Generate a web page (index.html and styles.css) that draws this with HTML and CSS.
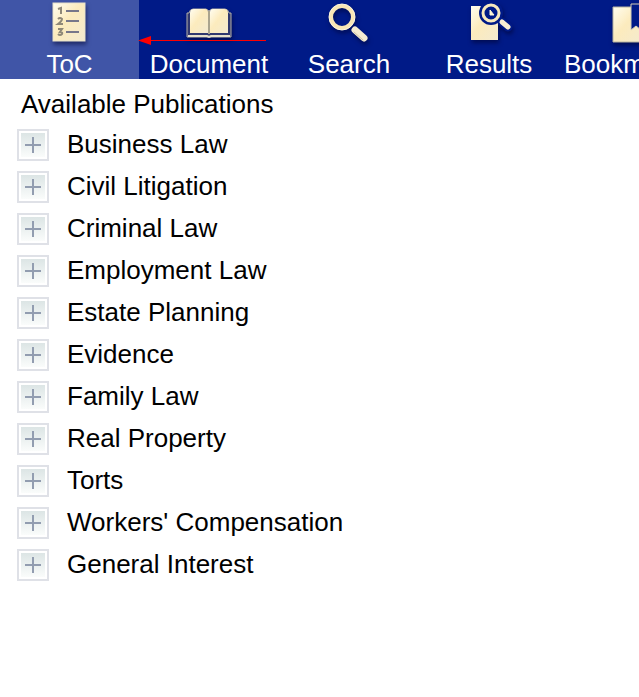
FILE: index.html
```html
<!DOCTYPE html>
<html lang="en">
<head>
  <meta charset="UTF-8">
  <meta name="viewport" content="width=device-width, initial-scale=1.0">
  <title>Available Publications</title>
  <link rel="stylesheet" href="styles.css">
</head>
<body>

  <header class="toolbar">
    <nav class="tabs">
      <a href="#toc" class="tab active">
        <svg class="icon" width="48" height="48" viewBox="0 0 48 48" aria-hidden="true">
          <defs>
            <linearGradient id="cream" x1="0" y1="0" x2="1" y2="1">
              <stop offset="0" stop-color="#fffdf0"/>
              <stop offset="0.45" stop-color="#fcebbd"/>
              <stop offset="1" stop-color="#f3ead0"/>
            </linearGradient>
          </defs>
          <rect x="7" y="3" width="32" height="38" fill="url(#cream)" stroke="#e8e2cb"/>
          <g fill="none" stroke="#8f8878" stroke-width="2">
            <path d="M20 11H33M20 21H33M20 32H33" stroke="#77778a"/>
            <path d="M12 9L15 8V14"/>
            <path d="M12 19Q14 17 16 19Q16 21 12 24H17"/>
            <path d="M12 29H16L14 32Q17 32 16 34Q14 36 12 34"/>
          </g>
        </svg>
        <span>ToC</span>
      </a>
      <a href="#document" class="tab">
        <svg class="icon" width="48" height="48" viewBox="0 0 48 48" aria-hidden="true">
          <path d="M2 13H4Q5 9 8 9H21L24 11L27 9H40Q43 9 44 13H46V37H2Z" fill="#30386f" stroke="#b4b2aa"/>
          <path d="M5 13Q5 9 9 9H20Q23 9 23 12V33H5Z" fill="url(#cream)"/>
          <path d="M25 12Q25 9 28 9H39Q43 9 43 13V33H25Z" fill="url(#cream)"/>
          <path d="M3 36H22L24 37L26 36H45" fill="none" stroke="#e6e0cc" stroke-width="2"/>
          <path d="M24 11V34" stroke="#aaa48e" stroke-width="2"/>
        </svg>
        <span>Document</span>
      </a>
      <a href="#search" class="tab">
        <svg class="icon" width="48" height="48" viewBox="0 0 48 48" aria-hidden="true">
          <circle cx="17" cy="17" r="11" fill="none" stroke="#f8e6b6" stroke-width="4"/>
          <circle cx="17" cy="17" r="13" fill="none" stroke="#fff8df"/>
          <path d="M30 30L39 38" stroke="#f5ecd2" stroke-width="7" stroke-linecap="round"/>
          <path d="M29 32L38 40" stroke="#cfc5a9" stroke-width="1" stroke-linecap="round"/>
        </svg>
        <span>Search</span>
      </a>
      <a href="#results" class="tab">
        <svg class="icon" width="48" height="48" viewBox="0 0 48 48" aria-hidden="true">
          <path d="M6 6H33V40H6Z" fill="url(#cream)"/>
          <circle cx="26" cy="13" r="12" fill="#001a87"/>
          <circle cx="26" cy="13" r="8" fill="none" stroke="#f8e9be" stroke-width="3"/>
          <path d="M25 10V15H29Z" fill="#fff6d6" stroke="#fff6d6"/>
          <path d="M37 22L43 27" stroke="#001a87" stroke-width="9" stroke-linecap="round"/>
          <path d="M37 22L43 27" stroke="#f8efd3" stroke-width="5" stroke-linecap="round"/>
        </svg>
        <span>Results</span>
      </a>
      <a href="#bookmarks" class="tab">
        <svg class="icon" width="48" height="48" viewBox="0 0 48 48" aria-hidden="true">
          <path d="M8 7H40V42H8Z" fill="url(#cream)" stroke="#b8b4a2"/>
          <path d="M26 4H36V30L31 26L26 30Z" fill="#001a87" stroke="#d5cfb8"/>
        </svg>
        <span>Bookmarks</span>
      </a>
    </nav>

    <svg class="arrow" width="128" height="9" viewBox="0 0 128 9" aria-hidden="true">
      <rect x="8" y="4" width="120" height="1" fill="#f00"/>
      <path d="M0 4.500L13 0V9Z" fill="#f00"/>
    </svg>
  </header>

  <main class="contents">
    <h1>Available Publications</h1>
    <ul class="publications">
      <li><button type="button" id="business" class="expand" aria-labelledby="business-name"></button><label id="business-name" for="business">Business Law</label></li>
      <li><button type="button" id="civil" class="expand" aria-labelledby="civil-name"></button><label id="civil-name" for="civil">Civil Litigation</label></li>
      <li><button type="button" id="criminal" class="expand" aria-labelledby="criminal-name"></button><label id="criminal-name" for="criminal">Criminal Law</label></li>
      <li><button type="button" id="employment" class="expand" aria-labelledby="employment-name"></button><label id="employment-name" for="employment">Employment Law</label></li>
      <li><button type="button" id="estate" class="expand" aria-labelledby="estate-name"></button><label id="estate-name" for="estate">Estate Planning</label></li>
      <li><button type="button" id="evidence" class="expand" aria-labelledby="evidence-name"></button><label id="evidence-name" for="evidence">Evidence</label></li>
      <li><button type="button" id="family" class="expand" aria-labelledby="family-name"></button><label id="family-name" for="family">Family Law</label></li>
      <li><button type="button" id="property" class="expand" aria-labelledby="property-name"></button><label id="property-name" for="property">Real Property</label></li>
      <li><button type="button" id="torts" class="expand" aria-labelledby="torts-name"></button><label id="torts-name" for="torts">Torts</label></li>
      <li><button type="button" id="workers" class="expand" aria-labelledby="workers-name"></button><label id="workers-name" for="workers">Workers' Compensation</label></li>
      <li><button type="button" id="general" class="expand" aria-labelledby="general-name"></button><label id="general-name" for="general">General Interest</label></li>
    </ul>
  </main>

</body>
</html>
```

FILE: styles.css
```css
body {
  margin: 0;
  background-color: #fff;
  color: #000;
  font-family: "Liberation Sans", Arial, Helvetica, sans-serif;
  font-size: 26px;
  line-height: 30px;
}

.toolbar {
  position: relative;
  overflow: hidden;
  background-color: #001a87;
}

.tabs {
  display: grid;
  grid-template-columns: 139px repeat(4, 140px);
}

.tab {
  display: flex;
  flex-direction: column;
  align-items: center;
  gap: 1px;
  color: #fff;
  text-decoration: none;
}

.tab.active {
  background-color: #4055a7;
}

.icon {
  display: block;
  filter: drop-shadow(1px 3px 2px rgba(0, 0, 40, 0.5));
}

/* arrow pointing at the active tab */
.arrow {
  position: absolute;
  left: 138px;
  top: 36px;
}

.contents {
  padding: 10px 17px;
}

h1 {
  margin: 0;
  padding: 0 4px;
  font-size: 26px;
  font-weight: normal;
}

.publications {
  margin: 0;
  padding: 5px 0;
  list-style: none;
}

.publications li {
  display: flex;
  align-items: center;
  gap: 18px;
  height: 42px;
}

.publications label {
  padding-bottom: 2px;
}

.expand {
  width: 32px;
  height: 32px;
  padding: 0;
  border: 2px solid #dfe1e7;
  background:
    linear-gradient(#929db0, #929db0) center / 16px 2px no-repeat,
    linear-gradient(#929db0, #929db0) center / 2px 16px no-repeat,
    linear-gradient(#dce5e5, #fafcfb) center / 24px 24px no-repeat,
    #fff;
  cursor: pointer;
}
```
